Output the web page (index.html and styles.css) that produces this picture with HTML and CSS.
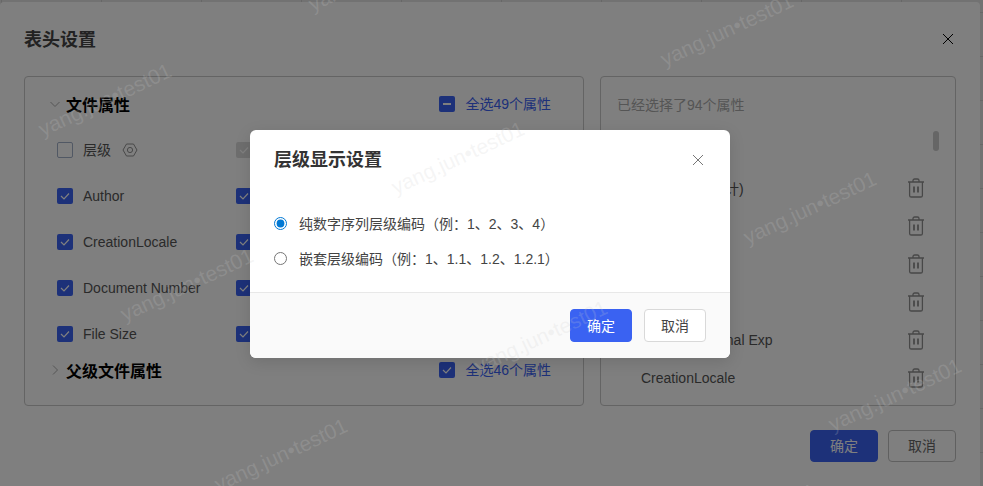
FILE: index.html
```html
<!DOCTYPE html>
<html lang="zh-CN">
<head>
  <meta charset="UTF-8">
  <title>表头设置</title>
  <link rel="stylesheet" href="styles.css">
</head>
<body>
  <svg class="sprites" xmlns="http://www.w3.org/2000/svg">
    <symbol id="trash" viewBox="0 0 18 20">
      <path d="M1 4h16M6 4V2.6C6 1.7 6.7 1 7.6 1h2.8c.9 0 1.6.7 1.6 1.6V4M2.6 4v13.4c0 .9.7 1.6 1.6 1.6h9.6c.9 0 1.6-.7 1.6-1.6V4" fill="none" stroke="currentColor" stroke-width="1.3"/>
      <path d="M7 8.500v6M11 8.500v6" fill="none" stroke="currentColor" stroke-width="1.8"/>
    </symbol>
    <symbol id="check" viewBox="0 0 16 16">
      <path d="M4 8l3 3 5-5.500" fill="none" stroke="currentColor" stroke-width="1.2"/>
    </symbol>
    <symbol id="close" viewBox="0 0 12 12">
      <path d="M1 1l10 10M11 1L1 11" fill="none" stroke="currentColor" stroke-width="1"/>
    </symbol>
  </svg>

  <div class="page">
    <div class="dialog">
      <div class="dialog-head">
        <h1 class="dialog-title">表头设置</h1>
        <svg class="close-icon"><use href="#close"/></svg>
      </div>

      <div class="panels">
        <section class="panel panel-left">
          <div class="group-head">
            <svg class="chevron" width="10" height="10" viewBox="0 0 10 10"><path d="M.5 3l4.500 4.500L9.500 3" fill="none" stroke="currentColor"/></svg>
            <h2 class="group-title">文件属性</h2>
            <label class="select-all">
              <span class="box box-minus"><span class="minus"></span></span><span class="raised">全选49个属性</span>
            </label>
          </div>
          <div class="attr-grid">
            <div class="attr">
              <span class="box box-empty"></span><span class="raised">层级</span>
              <svg class="hex-icon" width="16" height="16" viewBox="0 0 16 16"><path d="M4.500 2h7L15 8l-3.500 6h-7L1 8z" fill="none" stroke="currentColor"/><circle cx="8" cy="8" r="2.600" fill="none" stroke="currentColor"/></svg>
            </div>
            <div class="attr"><span class="box box-disabled"><svg class="check"><use href="#check"/></svg></span>名称</div>
            <div class="attr"><span class="box"><svg class="check"><use href="#check"/></svg></span>版本</div>
            <div class="attr"><span class="box"><svg class="check"><use href="#check"/></svg></span>Author</div>
            <div class="attr"><span class="box"><svg class="check"><use href="#check"/></svg></span>Company</div>
            <div class="attr"><span class="box"><svg class="check"><use href="#check"/></svg></span>Creator</div>
            <div class="attr"><span class="box"><svg class="check"><use href="#check"/></svg></span>CreationLocale</div>
            <div class="attr"><span class="box"><svg class="check"><use href="#check"/></svg></span>Description</div>
            <div class="attr"><span class="box"><svg class="check"><use href="#check"/></svg></span>Designer</div>
            <div class="attr"><span class="box"><svg class="check"><use href="#check"/></svg></span>Document Number</div>
            <div class="attr"><span class="box"><svg class="check"><use href="#check"/></svg></span>Editor</div>
            <div class="attr"><span class="box"><svg class="check"><use href="#check"/></svg></span>File Name</div>
            <div class="attr"><span class="box"><svg class="check"><use href="#check"/></svg></span>File Size</div>
            <div class="attr"><span class="box"><svg class="check"><use href="#check"/></svg></span>Format</div>
            <div class="attr"><span class="box"><svg class="check"><use href="#check"/></svg></span>Material</div>
          </div>
          <div class="group-head group-head-next">
            <svg class="chevron" width="10" height="10" viewBox="0 0 10 10"><path d="M3 .5L7.500 5 3 9.500" fill="none" stroke="currentColor"/></svg>
            <h2 class="group-title">父级文件属性</h2>
            <label class="select-all">
              <span class="box"><svg class="check"><use href="#check"/></svg></span><span class="raised">全选46个属性</span>
            </label>
          </div>
        </section>

        <section class="panel panel-right">
          <div class="picked-count">已经选择了94个属性</div>
          <div class="scroll-thumb"></div>
          <ul class="picked-list">
            <li class="picked-item">层级</li>
            <li class="picked-item">文件属性（合计)<svg class="trash"><use href="#trash"/></svg></li>
            <li class="picked-item">名称<svg class="trash"><use href="#trash"/></svg></li>
            <li class="picked-item">版本<svg class="trash"><use href="#trash"/></svg></li>
            <li class="picked-item">Author<svg class="trash"><use href="#trash"/></svg></li>
            <li class="picked-item">Authors External Exp<svg class="trash"><use href="#trash"/></svg></li>
            <li class="picked-item">CreationLocale<svg class="trash"><use href="#trash"/></svg></li>
          </ul>
        </section>
      </div>

      <div class="dialog-foot">
        <button class="btn btn-primary">确定</button>
        <button class="btn">取消</button>
      </div>
    </div>

    <div class="mask">
      <div class="modal">
        <div class="modal-head">
          <h3 class="modal-title">层级显示设置</h3>
          <svg class="close-icon modal-close"><use href="#close"/></svg>
        </div>
        <div class="modal-body">
          <label class="option"><input type="radio" name="code" checked><span class="raised">纯数字序列层级编码（例：1、2、3、4）</span></label>
          <label class="option"><input type="radio" name="code"><span class="raised">嵌套层级编码（例：1、1.1、1.2、1.2.1）</span></label>
        </div>
        <div class="modal-foot">
          <button class="modal-btn modal-btn-primary">确定</button>
          <button class="modal-btn">取消</button>
        </div>
      </div>
    </div>

    <span class="wm wm-1">yang.jun•test01</span>
    <span class="wm wm-2">yang.jun•test01</span>
    <span class="wm wm-3">yang.jun•test01</span>
    <span class="wm wm-4">yang.jun•test01</span>
    <span class="wm wm-5">yang.jun•test01</span>
    <span class="wm wm-6">yang.jun•test01</span>
    <span class="wm wm-7">yang.jun•test01</span>
    <span class="wm wm-8">yang.jun•test01</span>
    <span class="wm wm-9">yang.jun•test01</span>
    <span class="wm wm-10">yang.jun•test01</span>
  </div>
</body>
</html>
```

FILE: styles.css
```css
* { box-sizing: border-box; }

html, body {
  margin: 0;
  height: 100%;
  overflow: hidden;
}

body {
  font-family: "Liberation Sans", "Noto Sans CJK SC", sans-serif;
  font-size: 14px;
  color: #555;
}

.sprites { display: none; }

/* table of the page under the dialog, only its edges show */
.page {
  position: relative;
  width: 983px;
  height: 486px;
  overflow: hidden;
  padding-top: 2px;
  background-color: #e4e4e4;
  background-image:
    linear-gradient(90deg, #cfcfcf 1px, transparent 1px),
    linear-gradient(#cfcfcf 1px, transparent 1px);
  background-size: 100px 100%, 100% 44px;
  background-position: 101px 0, 0 12px;
}

/* big dialog behind the mask */
.dialog {
  width: 980px;
  height: 490px;
  background: #fff;
  border-radius: 4px;
}

.dialog-head {
  display: flex;
  justify-content: space-between;
  height: 74px;
  padding: 26px 26px 0 24px;
}

.dialog-title {
  margin: 0;
  font-size: 18px;
  line-height: 24px;
  font-weight: 700;
  color: #444;
}

.close-icon {
  width: 12px;
  height: 12px;
  margin-top: 5px;
  color: #000;
}

.panels {
  display: flex;
  gap: 16px;
  padding: 0 24px;
}

.panel {
  position: relative;
  height: 330px;
  border: 1px solid #c8c8c8;
  border-radius: 4px;
  overflow: hidden;
}

.panel-left {
  width: 560px;
  padding: 17px 32px 0 25px;
}

.panel-right {
  width: 356px;
  padding: 18px 0 0 16px;
}

.group-head {
  display: flex;
  align-items: center;
  height: 20px;
}

.group-head-next { margin-top: 3px; }

.chevron {
  margin-right: 6px;
  color: #aaa;
}

.group-title {
  margin: 0;
  font-size: 16px;
  font-weight: 700;
  color: #000;
}

.select-all {
  display: flex;
  align-items: center;
  margin-left: auto;
  color: #3a62f2;
}

.raised { margin-top: -2px; }

.box {
  display: flex;
  align-items: center;
  justify-content: center;
  flex: none;
  width: 16px;
  height: 16px;
  border-radius: 2px;
  background: #3a62f2;
  color: #fff;
  margin-right: 10px;
}

.box-empty {
  background: #fff;
  border: 1px solid #a3b0c8;
}

.box-disabled {
  background: #ddd;
  color: #fff;
}

.minus {
  width: 8px;
  height: 2px;
  background: #fff;
}

.check {
  width: 16px;
  height: 16px;
}

.attr-grid {
  display: grid;
  grid-template-columns: 179px 179px 1fr;
  grid-auto-rows: 46px;
  margin-top: 13px;
  margin-left: 7px;
}

.attr {
  display: flex;
  align-items: center;
  white-space: nowrap;
}

.hex-icon {
  margin-left: 11px;
  color: #909090;
}

.picked-count {
  line-height: 20px;
  color: #aaa;
}

.scroll-thumb {
  position: absolute;
  top: 54px;
  right: 16px;
  width: 6px;
  height: 20px;
  border-radius: 3px;
  background: #ccc;
}

.picked-list {
  margin: 16px 0 0;
  padding: 0 30px 0 24px;
  list-style: none;
}

.picked-item {
  display: flex;
  align-items: center;
  justify-content: space-between;
  height: 38px;
  white-space: nowrap;
}

.trash {
  width: 18px;
  height: 20px;
  color: #909090;
}

.dialog-foot {
  display: flex;
  justify-content: flex-end;
  gap: 10px;
  padding: 24px 24px 0 0;
}

.btn {
  width: 68px;
  height: 32px;
  padding: 0 0 2px;
  border: 1px solid #c0c0c0;
  border-radius: 4px;
  background: #fff;
  font: inherit;
  color: #666;
}

.btn-primary {
  border-color: #3a62f2;
  background: #3a62f2;
  color: #fff;
}

/* mask and the small dialog on top of it */
.mask {
  position: absolute;
  inset: 0;
  display: flex;
  justify-content: center;
  padding: 130px 3px 0 0;
  background: rgba(0, 0, 0, 0.5);
}

.modal {
  display: flex;
  flex-direction: column;
  width: 480px;
  height: 228px;
  background: #fff;
  border-radius: 6px;
  overflow: hidden;
  box-shadow: 0 4px 16px rgba(0, 0, 0, 0.12);
}

.modal-head {
  display: flex;
  justify-content: space-between;
  height: 60px;
  padding: 18px 26px 0 24px;
}

.modal-title {
  margin: 0;
  font-size: 18px;
  line-height: 24px;
  font-weight: 700;
  color: #333;
}

.modal-close {
  margin-top: 6px;
  color: #777;
}

.modal-body {
  flex: 1;
  padding: 16px 24px 0;
}

.option {
  display: flex;
  align-items: center;
  height: 35px;
  color: #444;
}

.option input {
  width: 13px;
  height: 13px;
  margin: 0 12px 0 0;
  accent-color: #0078d4;
}

.modal-foot {
  display: flex;
  justify-content: flex-end;
  gap: 12px;
  padding: 16px 24px;
  border-top: 1px solid #e8e8e8;
  background: #fafafa;
}

.modal-btn {
  width: 62px;
  height: 33px;
  padding: 0 0 2px;
  border: 1px solid #d9d9d9;
  border-radius: 4px;
  background: #fff;
  font: inherit;
  color: #444;
}

.modal-btn-primary {
  border-color: #3a62f2;
  background: #3a62f2;
  color: #fff;
}

/* watermark */
.wm {
  position: absolute;
  font-size: 21px;
  white-space: nowrap;
  color: rgba(205, 205, 205, 0.2);
  transform: translate(-50%, -50%) rotate(-25deg);
  pointer-events: none;
}

.wm-1 { left: 105px; top: 100px; }
.wm-2 { left: 375px; top: -25px; }
.wm-3 { left: 727px; top: 30px; }
.wm-4 { left: 458px; top: 158px; }
.wm-5 { left: 810px; top: 208px; }
.wm-6 { left: 187px; top: 285px; }
.wm-7 { left: 541px; top: 337px; }
.wm-8 { left: 895px; top: 395px; }
.wm-9 { left: 281px; top: 455px; }
.wm-10 { left: 750px; top: 520px; }
```
